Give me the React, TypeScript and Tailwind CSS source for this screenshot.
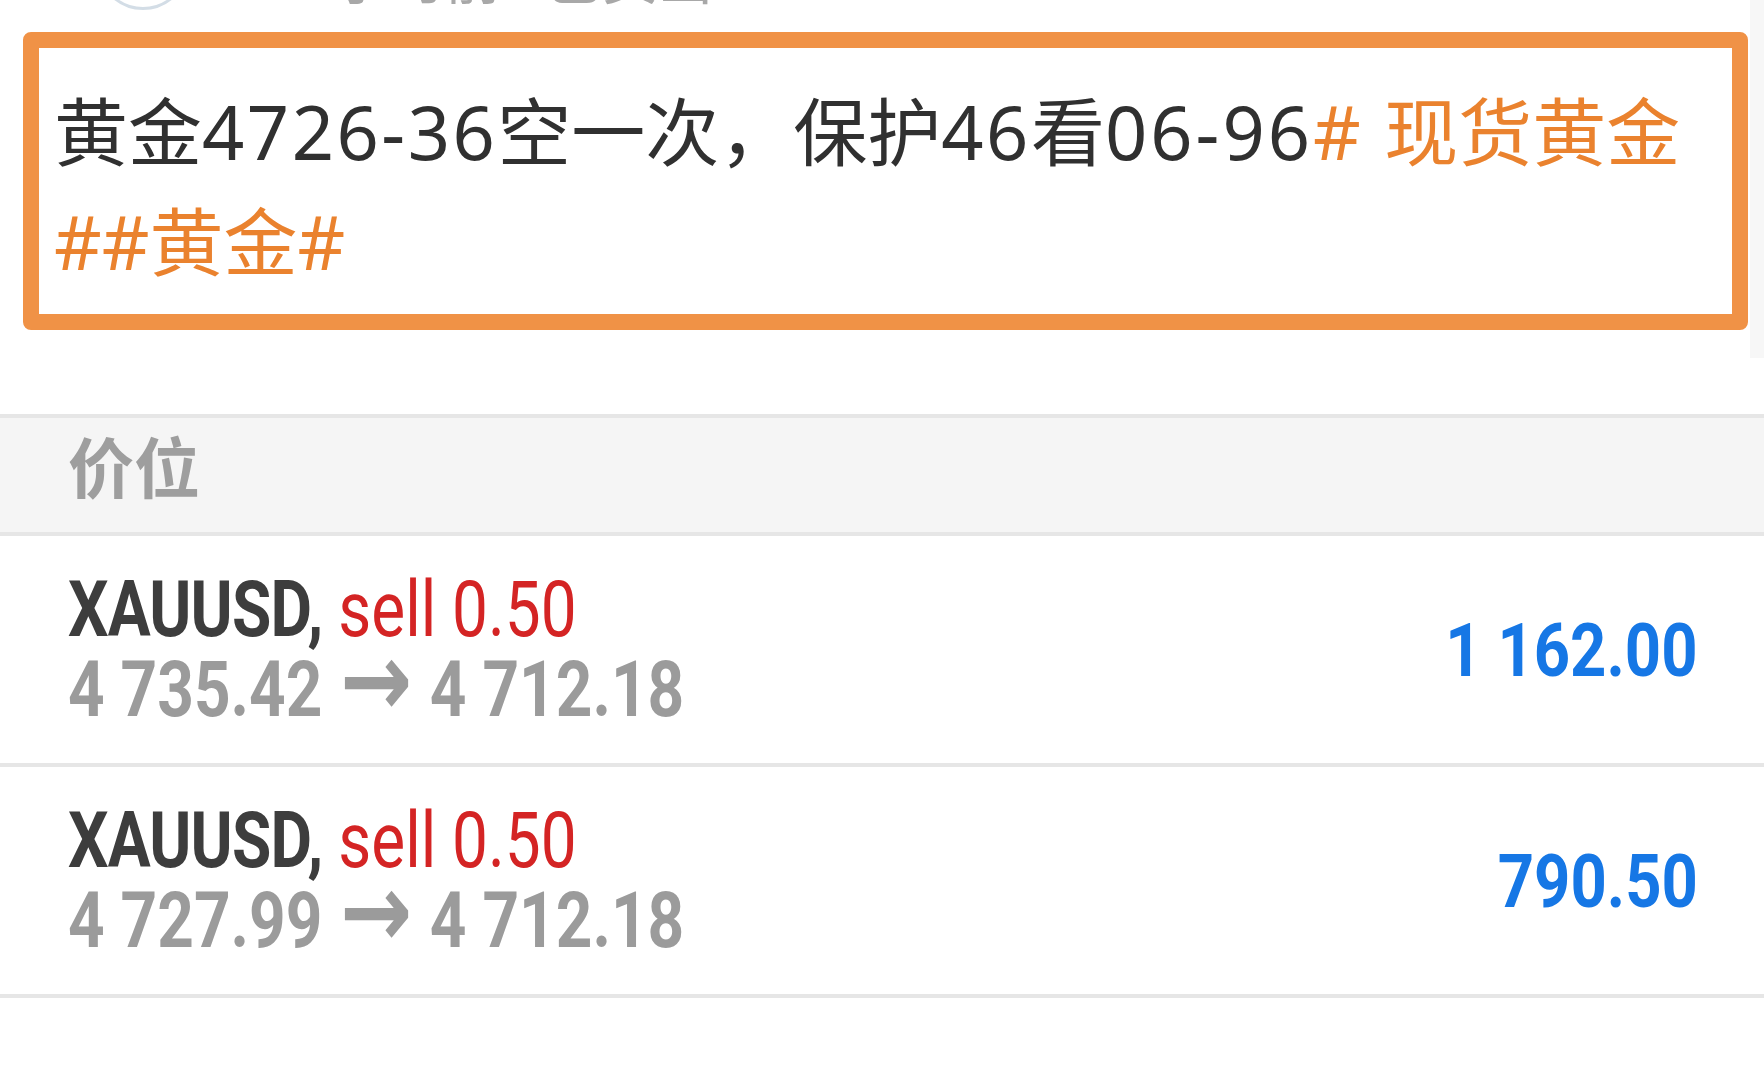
const cjk = "font-['Noto_Sans','Noto_Sans_CJK_SC',sans-serif]";
const num = "font-['Roboto','Noto_Sans_CJK_SC',sans-serif]";

type Position = { open: string; close: string; profit: string };

const positions: Position[] = [
  { open: "4 735.42", close: "4 712.18", profit: "1 162.00" },
  { open: "4 727.99", close: "4 712.18", profit: "790.50" },
];

function PositionRow({ p }: { p: Position }) {
  return (
    <div className="flex items-center justify-between h-[231px] pl-[68px] pr-[66px] border-b-4 border-[#e6e6e6]">
      <div className={`${num} text-[77px] leading-[80px] inline-block scale-x-[0.83] origin-left whitespace-nowrap`}>
        <div>
          <span className="font-bold tracking-[-1px] text-[#3d3d3d]">XAUUSD,</span>{" "}
          <span className="text-[#d42424]">sell 0.50</span>
        </div>
        <div className="font-bold text-[#9b9b9b]">
          {p.open}{" "}
          <span className="font-['DejaVu_Sans',sans-serif] text-[104px] leading-[0px] mx-[2px]">→</span>{" "}
          {p.close}
        </div>
      </div>
      <div className={`${num} text-[75px] leading-[80px] font-bold text-[#1677e5] inline-block scale-x-[0.845] origin-right whitespace-nowrap`}>
        {p.profit}
      </div>
    </div>
  );
}

export default function App() {
  return (
    <div className="w-[1764px] h-[1076px] bg-white overflow-hidden">
      <div className="flex">
        <div className="w-[1750px]">
          {/* cut-off meta line above the post */}
          <div className="h-[10px] overflow-hidden flex items-start">
            <div className="ml-[97px] mt-[-82px] w-[92px] h-[92px] rounded-full border-[3px] border-[#d3dde6] shrink-0" />
            <div className={`${cjk} ml-[112px] mt-[-65px] text-[56px] text-[#a8a8a8] whitespace-nowrap`}>
              6小时前 · 已卖出
            </div>
          </div>

          <div className="mt-[22px] ml-[23px] w-[1725px] h-[298px] border-[16px] border-[#f09246] rounded-[8px] pl-[15px] pt-[29px]">
            <p className={`${cjk} text-[74px] leading-[110px] text-[#303030] whitespace-nowrap`}>
              黄金<span className="tracking-[2.5px]">4726-36</span>空一次，保护
              <span className="tracking-[2.5px]">46</span>看
              <span className="tracking-[3px]">06-96</span>
              <span className="text-[#ea822e] tracking-[2px]"># </span>
              <span className="text-[#ea822e]">现货黄金</span>
              <br />
              <span className="text-[#ea822e]">##黄金#</span>
            </p>
          </div>
        </div>
        <div className="w-[14px] h-[358px] bg-[#f7f7f7]" />
      </div>

      <div className="mt-[56px] border-t-4 border-[#e6e6e6]">
        <div className="h-[118px] bg-[#f5f5f5] border-b-4 border-[#e6e6e6] px-[68px]">
          <span className={`${cjk} text-[66px] font-bold text-[#9e9e9e]`}>价位</span>
        </div>
        {positions.map((p, i) => (
          <PositionRow key={i} p={p} />
        ))}
      </div>
    </div>
  );
}
